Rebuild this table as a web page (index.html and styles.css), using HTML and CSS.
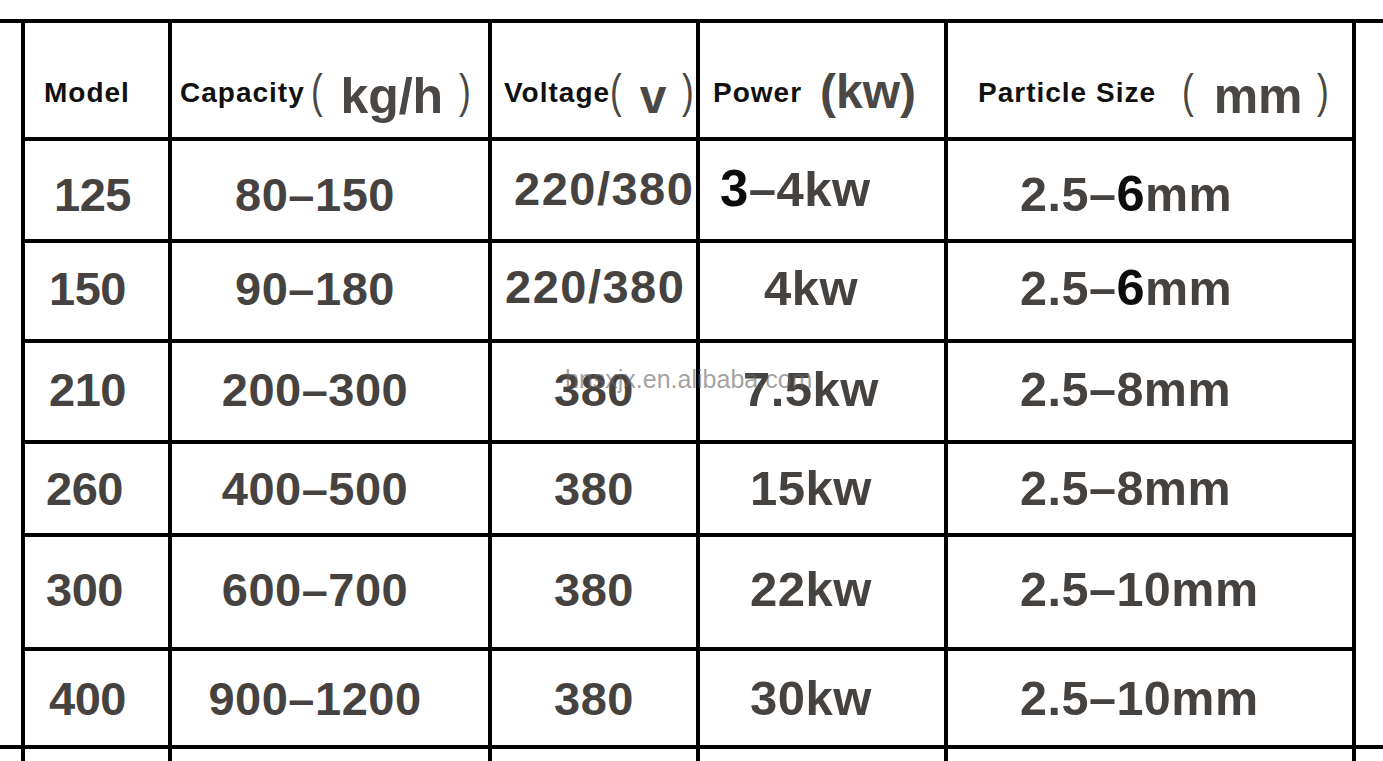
FILE: index.html
```html
<!DOCTYPE html>
<html lang="en">
<head>
<meta charset="utf-8">
<title>Specification table</title>
<link rel="stylesheet" href="styles.css">
</head>
<body>
<div class="sheet">
  <div class="rule"></div>
  <div class="table">
    <div class="cell head c1"><span class="label">Model</span></div>
    <div class="cell head c2"><span class="label">Capacity</span><span class="paren p-kg">(</span><span class="unit u-kg">kg/h</span><span class="paren p-kg2">)</span></div>
    <div class="cell head c3"><span class="label">Voltage</span><span class="paren p-v">(</span><span class="unit u-v">v</span><span class="paren p-v2">)</span></div>
    <div class="cell head c4"><span class="label">Power</span><span class="unit u-kw">(kw)</span></div>
    <div class="cell head c5"><span class="label">Particle Size</span><span class="paren p-mm">(</span><span class="unit u-mm">mm</span><span class="paren p-mm2">)</span></div>

    <div class="cell data c1 r1 m1">125</div>
    <div class="cell data c2 r1">80–150</div>
    <div class="cell data c3 r1 wide1">220/380</div>
    <div class="cell data c4 r1 left1"><span class="strong">3</span>–4kw</div>
    <div class="cell data c5 r1">2.5–<span class="strong">6</span>mm</div>

    <div class="cell data c1 up">150</div>
    <div class="cell data c2 up">90–180</div>
    <div class="cell data c3 wide2">220/380</div>
    <div class="cell data c4 up">4kw</div>
    <div class="cell data c5 up">2.5–<span class="strong">6</span>mm</div>

    <div class="cell data c1 up">210</div>
    <div class="cell data c2 up">200–300</div>
    <div class="cell data c3 up">380</div>
    <div class="cell data c4 up">7.5kw</div>
    <div class="cell data c5 up">2.5–8mm</div>

    <div class="cell data c1 m4">260</div>
    <div class="cell data c2">400–500</div>
    <div class="cell data c3">380</div>
    <div class="cell data c4">15kw</div>
    <div class="cell data c5">2.5–8mm</div>

    <div class="cell data c1 m4 up">300</div>
    <div class="cell data c2 up">600–700</div>
    <div class="cell data c3 up">380</div>
    <div class="cell data c4 up">22kw</div>
    <div class="cell data c5 up">2.5–10mm</div>

    <div class="cell data c1">400</div>
    <div class="cell data c2">900–1200</div>
    <div class="cell data c3">380</div>
    <div class="cell data c4">30kw</div>
    <div class="cell data c5">2.5–10mm</div>
  </div>
  <div class="rule"></div>
  <div class="stubs">
    <div class="stub"></div><div class="stub"></div><div class="stub"></div><div class="stub"></div><div class="stub"></div>
  </div>
  <div class="watermark">hnsxjx.en.alibaba.com</div>
</div>
</body>
</html>
```

FILE: styles.css
```css
html, body {
  margin: 0;
  padding: 0;
  background: #ffffff;
}

body {
  width: 1383px;
  height: 761px;
  overflow: hidden;
  font-family: "Liberation Sans", Arial, sans-serif;
}

.sheet {
  position: relative;
  padding-top: 19px;
}

.rule {
  height: 4px;
  background: #000;
}

.table {
  display: grid;
  margin-left: 21px;
  width: 1335px;
  box-sizing: border-box;
  padding: 0 4px;
  background: #000;
  grid-template-columns: 143px 316px 204px 244px 404px;
  grid-template-rows: 114px 98px 96px 97px 89px 110px 94px;
  column-gap: 4px;
  row-gap: 4px;
}

.stubs {
  display: grid;
  margin-left: 21px;
  width: 1335px;
  box-sizing: border-box;
  padding: 0 4px;
  background: #000;
  grid-template-columns: 143px 316px 204px 244px 404px;
  column-gap: 4px;
  height: 12px;
}

.stub {
  background: #fff;
}

.cell {
  background: #fff;
  white-space: nowrap;
  box-sizing: border-box;
}

/* header */
.head {
  display: block;
  padding-top: 42px;
  font-size: 50px;
  line-height: 40px;
  color: #4a4744;
}

.label {
  font-size: 28px;
  font-weight: 700;
  color: #111;
  letter-spacing: 1px;
}

.unit {
  font-size: 50px;
  font-weight: 700;
  color: #4a4744;
  vertical-align: -11px;
}

.paren {
  display: inline-block;
  font-size: 47px;
  font-weight: 400;
  color: #4a4744;
  transform: scaleX(0.75);
  transform-origin: left center;
  vertical-align: -5px;
}

.head.c1 { padding-left: 19px; }
.head.c2 { padding-left: 8px; }
.head.c3 { padding-left: 12px; }
.head.c4 { padding-left: 13px; }
.head.c5 { padding-left: 30px; }

.p-kg { margin-left: 6px; }
.u-kg { margin-left: 14px; }
.p-kg2 { margin-left: 16px; }

.p-v { margin-left: 0; }
.u-v { margin-left: 14px; font-size: 48px; }
.p-v2 { margin-left: 16px; }

.u-kw { margin-left: 18px; font-size: 48px; vertical-align: -6px; }

.p-mm { margin-left: 26px; }
.u-mm { margin-left: 16px; }
.p-mm2 { margin-left: 14px; }

/* data */
.data {
  display: flex;
  align-items: center;
  font-size: 47px;
  font-weight: 700;
  color: #46423f;
  letter-spacing: 0.5px;
  line-height: 1;
}

.data.r1 { padding-top: 8px; }
.data.up { padding-bottom: 5px; }

.data.c1 { padding-left: 24px; letter-spacing: -0.5px; }
.data.c1.m1 { padding-left: 29px; }
.data.c1.m4 { padding-left: 21px; }
.data.c2 { justify-content: center; padding-right: 30px; }
.data.c3 { justify-content: center; }
.data.c4 { justify-content: center; padding-right: 22px; font-size: 49px; }
.data.c5 { padding-left: 72px; font-size: 48.5px; }

.data.c3.wide1 { justify-content: flex-start; padding-left: 22px; padding-top: 0; padding-bottom: 4px; letter-spacing: 1.5px; }
.data.c3.wide2 { justify-content: flex-start; padding-left: 13px; padding-bottom: 10px; letter-spacing: 1.5px; }
.data.c4.left1 { justify-content: flex-start; padding-left: 20px; padding-right: 0; padding-top: 0; padding-bottom: 2px; }

.strong {
  color: #0d0d0d;
  font-size: 1.04em;
}

.watermark {
  position: absolute;
  left: 565px;
  top: 365px;
  font-size: 25px;
  font-weight: 400;
  color: rgba(100, 100, 100, 0.6);
  white-space: nowrap;
}
```
